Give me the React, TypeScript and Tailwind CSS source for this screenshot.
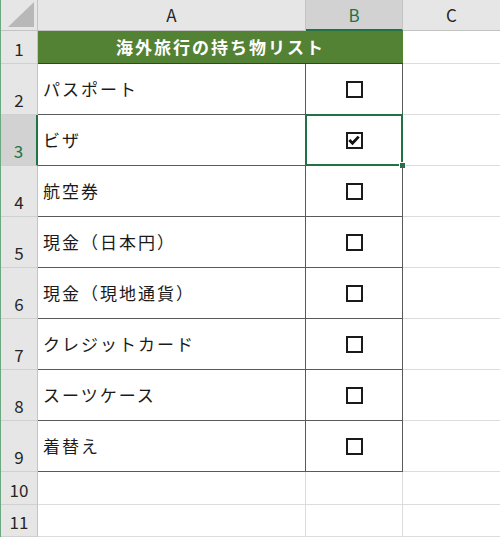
import React from "react";

const items = [
  { label: "パスポート", checked: false },
  { label: "ビザ", checked: true },
  { label: "航空券", checked: false },
  { label: "現金（日本円）", checked: false },
  { label: "現金（現地通貨）", checked: false },
  { label: "クレジットカード", checked: false },
  { label: "スーツケース", checked: false },
  { label: "着替え", checked: false },
];

const font = { fontFamily: '"Noto Sans CJK JP", "Noto Sans", sans-serif' };

function CheckBox({ checked }: { checked: boolean }) {
  return (
    <div className="w-[17px] h-[17px] border-2 border-[#1a1a1a] bg-white flex items-center justify-center">
      {checked ? (
        <svg width="12" height="12" viewBox="0 0 12 12">
          <path d="M1.3 6 L4.5 9.3 L10.7 2.6" fill="none" stroke="#111" strokeWidth="2.8" strokeLinejoin="miter" />
        </svg>
      ) : null}
    </div>
  );
}

function RowHead({ n, active }: { n: number; active?: boolean }) {
  return (
    <div
      className={`flex items-end justify-center pb-[2px] text-[17px] border-b border-[#d0d0d0] ${
        active
          ? "bg-[#d2d2d2] text-[#217346] border-r-2 border-r-[#217346]"
          : "bg-[#e6e6e6] text-[#262626] border-r border-r-[#c4c4c4]"
      }`}
    >
      {n}
    </div>
  );
}

export default function App() {
  return (
    <div className="w-[500px] h-[537px] bg-white overflow-hidden flex" style={font}>
      <div className="w-px bg-[#6aa882]" />
      <div className="grid grid-cols-[37px_268px_97px_97px] grid-rows-[31px_33px_repeat(8,51px)_33px_32px] flex-1">
        {/* column headers */}
        <div className="bg-[#e6e6e6] border-r border-b border-[#c4c4c4] flex items-end justify-end p-[3px]">
          <svg width="26" height="25" viewBox="0 0 26 25">
            <polygon points="26,0 26,25 0,25" fill="#b8b8b8" />
          </svg>
        </div>
        <div className="bg-[#e6e6e6] border-r border-b border-[#c4c4c4] flex items-center justify-center text-[17px] text-[#262626]">
          A
        </div>
        <div className="bg-[#d2d2d2] border-r border-[#c4c4c4] border-b-2 border-b-[#217346] flex items-center justify-center text-[17px] text-[#217346]">
          B
        </div>
        <div className="bg-[#e6e6e6] border-b border-[#c4c4c4] flex items-center justify-center text-[17px] text-[#262626]">
          C
        </div>

        {/* row 1: title */}
        <RowHead n={1} />
        <div className="col-span-2 bg-[#548235] border-b border-[#3c3c3c] flex items-center justify-center text-white font-bold text-[17px] tracking-[2px]">
          海外旅行の持ち物リスト
        </div>
        <div className="border-b border-[#dcdcdc]" />

        {items.map((it, i) => {
          const selected = i === 1;
          return (
            <React.Fragment key={it.label}>
              <RowHead n={i + 2} active={selected} />
              <div className="border-r border-b border-[#5a5a5a] flex items-center pl-[5px] text-[17px] tracking-[2px] text-[#1a1a1a]">
                {it.label}
              </div>
              <div
                className={`relative flex items-center justify-center ${
                  selected
                    ? "border-2 border-[#217346] -ml-px -mt-px"
                    : "border-r border-b border-[#5a5a5a]"
                }`}
              >
                <CheckBox checked={it.checked} />
                {selected ? (
                  <div className="absolute -right-[5px] -bottom-[5px] w-[7px] h-[7px] bg-[#217346] border border-white" />
                ) : null}
              </div>
              <div className="border-b border-[#dcdcdc]" />
            </React.Fragment>
          );
        })}

        {[10, 11].map((n) => (
          <React.Fragment key={n}>
            <RowHead n={n} />
            <div className="border-r border-b border-[#dcdcdc]" />
            <div className="border-r border-b border-[#dcdcdc]" />
            <div className="border-b border-[#dcdcdc]" />
          </React.Fragment>
        ))}
      </div>
    </div>
  );
}
